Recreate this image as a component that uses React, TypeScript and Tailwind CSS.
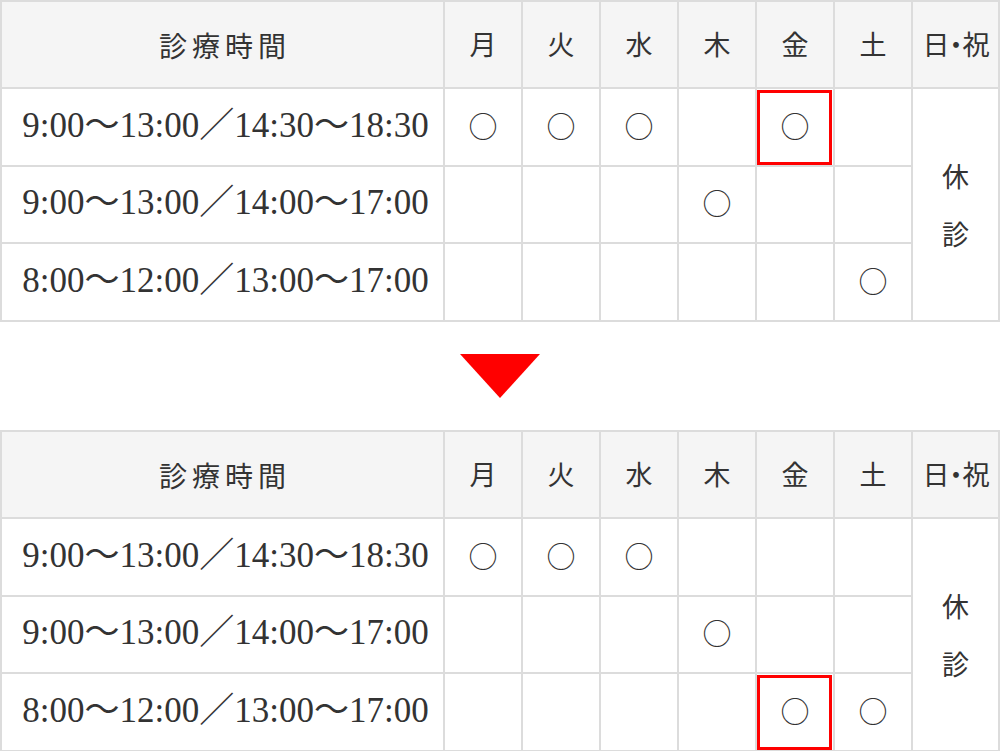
import type { ReactNode } from "react";

type Row = {
  time: string;
  marks: boolean[];
};

const days = ["月", "火", "水", "木", "金", "土"];

const rows: Row[] = [
  { time: "9:00～13:00／14:30～18:30", marks: [true, true, true, false, true, false] },
  { time: "9:00～13:00／14:00～17:00", marks: [false, false, false, true, false, false] },
  { time: "8:00～12:00／13:00～17:00", marks: [false, false, false, false, false, true] },
];

const rowsAfter: Row[] = [
  { time: "9:00～13:00／14:30～18:30", marks: [true, true, true, false, false, false] },
  { time: "9:00～13:00／14:00～17:00", marks: [false, false, false, true, false, false] },
  { time: "8:00～12:00／13:00～17:00", marks: [false, false, false, false, true, true] },
];

const rowHeights = ["h-[78px]", "h-[77px]", "h-[78px]"];

const serif = "font-['Liberation_Serif','Noto_Sans_CJK_JP',serif]";
const jp = "font-['Noto_Sans_CJK_JP',sans-serif]";

const Cell = ({ children, highlight }: { children?: ReactNode; highlight?: boolean }) => (
  <td className="relative border-2 border-[#dcdcdc] p-0 text-center align-middle">
    {highlight && (
      <span className="absolute top-px right-[1px] bottom-0 left-0 border-[3px] border-[#ff0000]" />
    )}
    {children}
  </td>
);

type ScheduleTableProps = {
  data: Row[];
  highlight: [number, number];
};

const ScheduleTable = ({ data, highlight }: ScheduleTableProps) => {
  return (
    <table className="w-[998px] table-fixed border-collapse border-2 border-[#dcdcdc] text-[#333]">
      <colgroup>
        <col className="w-[443px]" />
        {days.map((day) => (
          <col key={day} className="w-[78px]" />
        ))}
        <col className="w-[87px]" />
      </colgroup>
      <thead>
        <tr className="h-[87px] bg-[#f5f5f5]">
          <th className={cn(jp, "border-2 border-[#dcdcdc] pl-[5px] text-[28px] font-normal tracking-[5px]")}>
            診療時間
          </th>
          {days.map((day) => (
            <th key={day} className={cn(jp, "border-2 border-[#dcdcdc] text-[27px] font-normal")}>
              {day}
            </th>
          ))}
          <th className={cn(jp, "border-2 border-[#dcdcdc] pr-[6px] text-[27px] font-normal whitespace-nowrap tracking-[-7px]")}>
            日・祝
          </th>
        </tr>
      </thead>
      <tbody>
        {data.map((row, rowIndex) => (
          <tr key={row.time} className={rowHeights[rowIndex]}>
            <td className={cn(serif, "border-2 border-[#dcdcdc] pb-[2px] pl-[6px] text-center text-[35px] whitespace-nowrap")}>
              {row.time}
            </td>
            {row.marks.map((mark, dayIndex) => (
              <Cell
                key={dayIndex}
                highlight={highlight[0] === rowIndex && highlight[1] === dayIndex}
              >
                {mark && <span className={cn(jp, "text-[29px] leading-none")}>○</span>}
              </Cell>
            ))}
            {rowIndex === 0 && (
              <td
                rowSpan={3}
                className={cn(jp, "border-2 border-[#dcdcdc] text-center align-middle text-[27px] leading-[58px]")}
              >
                休
                <br />
                診
              </td>
            )}
          </tr>
        ))}
      </tbody>
    </table>
  );
};

function cn(...names: string[]) {
  return names.join(" ");
}

export default function App() {
  return (
    <div className="w-[1000px] bg-white">
      <ScheduleTable data={rows} highlight={[0, 4]} />
      <div className="flex justify-center pt-[32px] pb-[32px]">
        <div className="h-0 w-0 border-t-[44px] border-r-[40px] border-l-[40px] border-t-[#ff0000] border-r-transparent border-l-transparent" />
      </div>
      <ScheduleTable data={rowsAfter} highlight={[2, 4]} />
    </div>
  );
}
